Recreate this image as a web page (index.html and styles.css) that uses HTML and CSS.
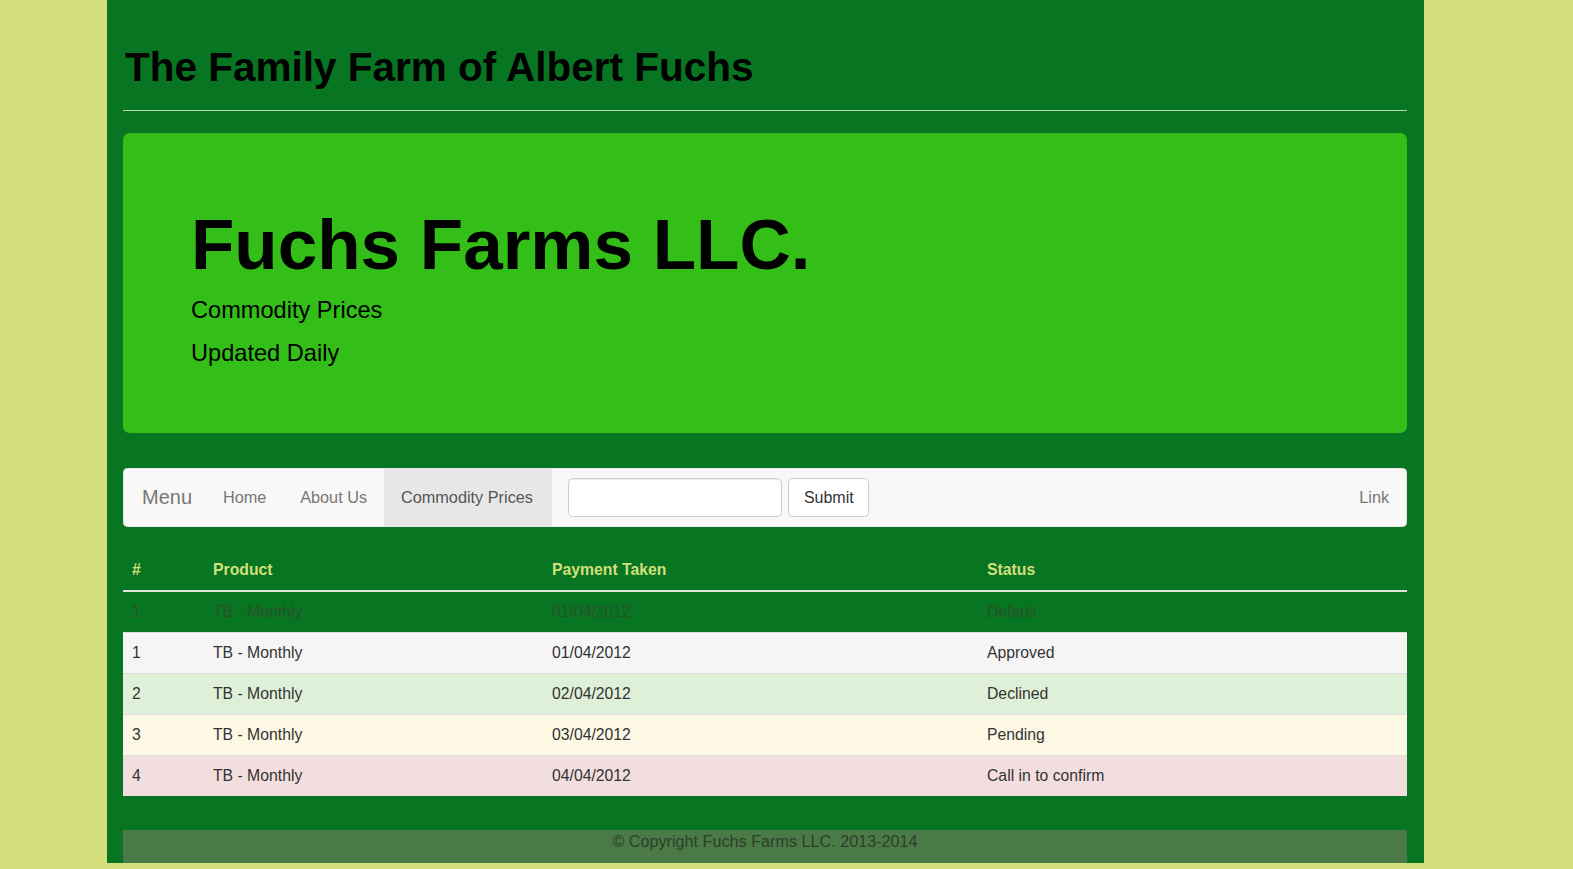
FILE: index.html
```html
<!DOCTYPE html>
<html lang="en">
<head>
<meta charset="utf-8">
<title>Fuchs Farms LLC.</title>
<link rel="stylesheet" href="styles.css">
</head>
<body>
<div class="container">
  <header class="page-header">
    <h1>The Family Farm of Albert Fuchs</h1>
  </header>

  <section class="jumbotron">
    <h1>Fuchs Farms LLC.</h1>
    <p>Commodity Prices</p>
    <p>Updated Daily</p>
  </section>

  <nav class="navbar">
    <a class="brand" href="#">Menu</a>
    <a class="nav-link" href="#">Home</a>
    <a class="nav-link" href="#">About Us</a>
    <a class="nav-link active" href="#">Commodity Prices</a>
    <form class="nav-form">
      <input class="form-control" type="text">
      <button class="btn" type="button">Submit</button>
    </form>
    <a class="nav-link nav-right" href="#">Link</a>
  </nav>

  <table class="table">
    <colgroup>
      <col class="col-num">
      <col class="col-product">
      <col class="col-payment">
      <col class="col-status">
    </colgroup>
    <thead>
      <tr><th>#</th><th>Product</th><th>Payment Taken</th><th>Status</th></tr>
    </thead>
    <tbody>
      <tr class="row-default"><td>1</td><td>TB - Monthly</td><td>01/04/2012</td><td>Default</td></tr>
      <tr class="row-active"><td>1</td><td>TB - Monthly</td><td>01/04/2012</td><td>Approved</td></tr>
      <tr class="row-success"><td>2</td><td>TB - Monthly</td><td>02/04/2012</td><td>Declined</td></tr>
      <tr class="row-warning"><td>3</td><td>TB - Monthly</td><td>03/04/2012</td><td>Pending</td></tr>
      <tr class="row-danger"><td>4</td><td>TB - Monthly</td><td>04/04/2012</td><td>Call in to confirm</td></tr>
    </tbody>
  </table>

  <footer class="footer">© Copyright Fuchs Farms LLC. 2013-2014</footer>
</div>
</body>
</html>
```

FILE: styles.css
```css
* { box-sizing: border-box; }

html, body {
  margin: 0;
  padding: 0;
}

body {
  background: #d2df7b;
  font-family: "Liberation Sans", Arial, Helvetica, sans-serif;
  font-size: 15.75px;
  line-height: 22.5px;
  color: #000;
}

.container {
  width: 1317px;
  margin-left: 107px;
  padding: 0 17px 0 16px;
  background: #077521;
}

.page-header {
  padding-top: 45px;
  padding-bottom: 20px;
  border-bottom: 1px solid #b5dcae;
}

.page-header h1 {
  margin: 0;
  padding-left: 2px;
  font-size: 40.5px;
  line-height: 44.5px;
  font-weight: bold;
  color: #000;
}

.jumbotron {
  margin-top: 22px;
  padding: 73px 60px 62px 68px;
  background: #33bf17;
  border-radius: 6.75px;
}

.jumbotron h1 {
  margin: 0 0 10px;
  font-size: 71px;
  line-height: 78px;
  font-weight: bold;
  color: #000;
}

.jumbotron p {
  margin: 0 0 10px;
  font-size: 23.6px;
  line-height: 33.75px;
  color: #000;
}

.jumbotron p:last-child { margin-bottom: 0; }

.navbar {
  margin-top: 35px;
  display: flex;
  align-items: stretch;
  height: 59px;
  background: #f8f8f8;
  border: 1px solid #e7e7e7;
  border-radius: 4.5px;
}

.navbar a {
  text-decoration: none;
}

.brand {
  display: block;
  padding: 0 14px 0 18px;
  font-size: 20px;
  line-height: 57px;
  color: #777;
}

.nav-link {
  display: block;
  padding: 0 16.9px;
  font-size: 16.3px;
  line-height: 57px;
  color: #777;
}

.nav-link.active {
  padding-right: 18.5px;
  background: #e7e7e7;
  color: #555;
}

.nav-right {
  margin-left: auto;
}

.nav-form {
  display: flex;
  align-items: center;
  gap: 6px;
  margin: 0;
  padding: 0 16.9px;
}

.form-control {
  width: 214px;
  height: 38.25px;
  padding: 6.75px 13.5px;
  border: 1px solid #ccc;
  border-radius: 4.5px;
  background: #fff;
  box-shadow: inset 0 1px 1px rgba(0, 0, 0, 0.075);
  font-family: inherit;
  font-size: 15.75px;
}

.btn {
  height: 38.25px;
  padding: 0 14.5px;
  border: 1px solid #ccc;
  border-radius: 4.5px;
  background: #fff;
  color: #333;
  font-family: inherit;
  font-size: 16px;
}

.table {
  width: 100%;
  margin-top: 22.5px;
  border-collapse: collapse;
  table-layout: fixed;
}

.col-num { width: 81px; }
.col-product { width: 339px; }
.col-payment { width: 435px; }

.table th {
  padding: 9px;
  text-align: left;
  font-weight: bold;
  color: #d2df7b;
  border-bottom: 2.25px solid #dde6d6;
}

.table td {
  padding: 8.75px 9px;
  color: #333;
  border-top: 1px solid #ddd;
}

.table tbody tr:first-child td { border-top: 0; }

.row-default td { color: #27532c !important; }
.row-active td { background: #f5f5f5; }
.row-success td { background: #dff0d8; }
.row-warning td { background: #fcf8e3; }
.row-danger td { background: #f2dede; }

.footer {
  margin-top: 34px;
  padding-bottom: 10.5px;
  background: #4a7a45;
  color: #2e3e2c;
  font-size: 16.2px;
  text-align: center;
}
```
